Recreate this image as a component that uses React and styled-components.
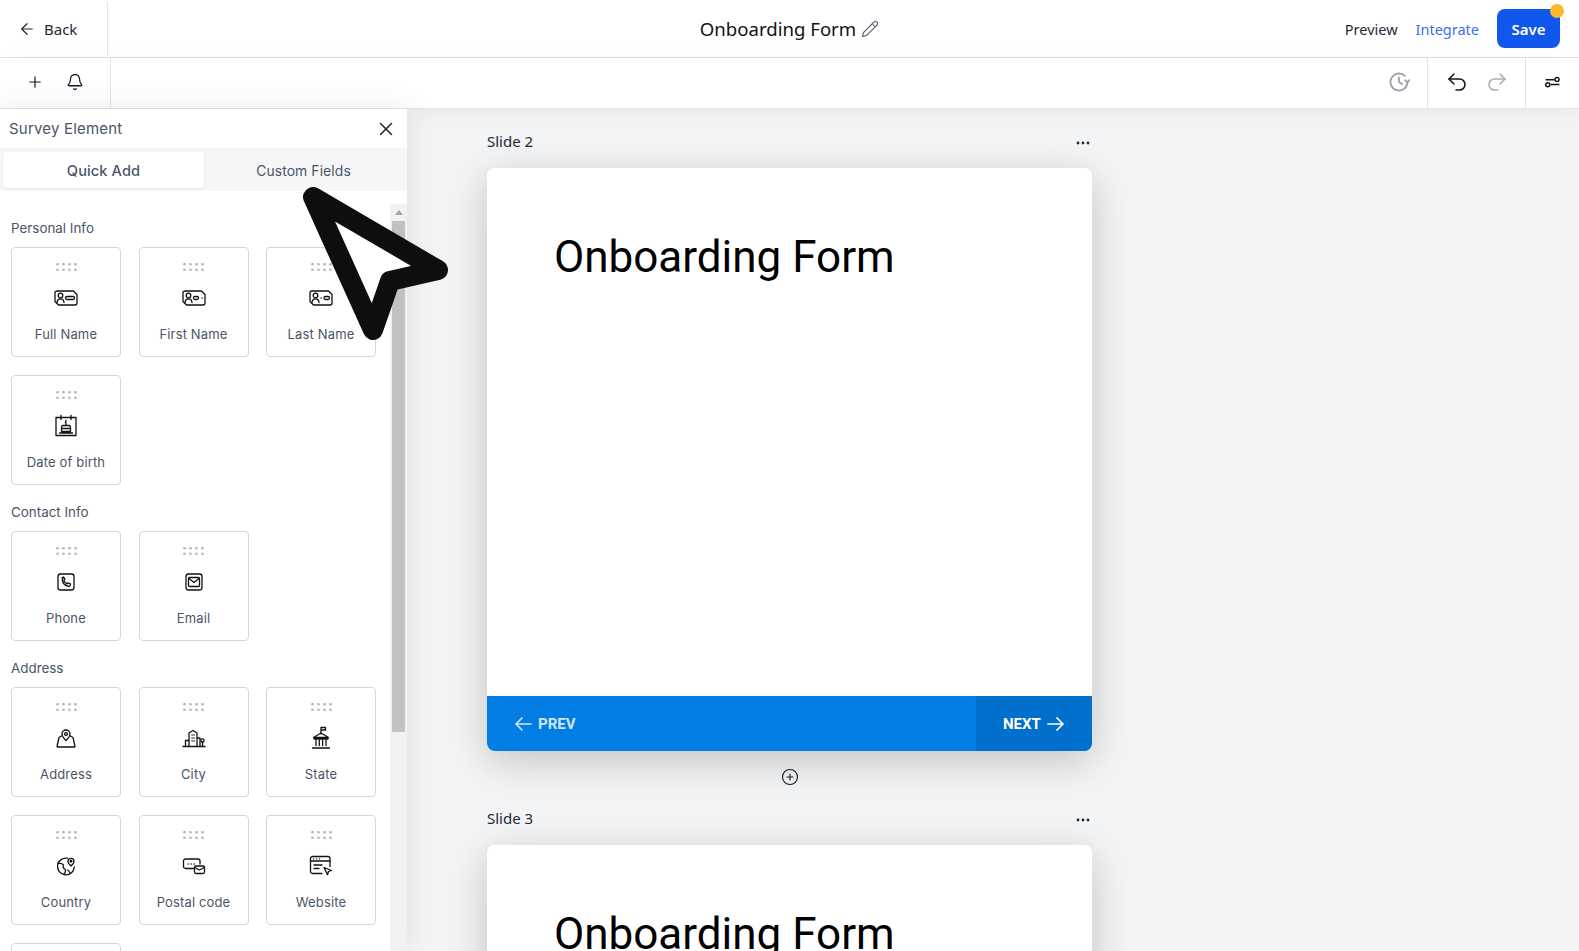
import styled, { createGlobalStyle } from 'styled-components';
import { ArrowLeft, Plus, Bell, X, Pencil, Undo2, Redo2, CirclePlus } from 'lucide-react';

const GlobalStyle = createGlobalStyle`
  html, body {
    margin: 0;
    padding: 0;
    height: 100%;
    background: #f3f4f6;
    font-family: "Noto Sans", sans-serif;
  }
  * { box-sizing: border-box; }
`;

const Page = styled.div`
  position: relative;
  width: 100%;
  height: 100vh;
  display: flex;
  flex-direction: column;
  overflow: hidden;
`;

const TopBar = styled.header`
  height: 58px;
  flex: none;
  display: grid;
  grid-template-columns: 1fr auto 1fr;
  align-items: center;
  background: #fff;
  border-bottom: 1px solid #e3e4e7;
`;

const BackWrap = styled.div`
  width: 108px;
  height: 53px;
  display: flex;
  align-items: center;
  gap: 8px;
  padding-left: 18px;
  border-right: 1px solid #e3e4e7;
  color: #1f2937;
  font-size: 15px;
`;

const FormTitle = styled.div`
  display: flex;
  align-items: center;
  gap: 5px;
  font-family: "Noto Sans", sans-serif;
  font-size: 18.6px;
  color: #111;
`;

const TopActions = styled.div`
  display: flex;
  justify-content: flex-end;
  align-items: center;
  gap: 18px;
  padding-right: 19px;
  font-size: 14.5px;
`;

const TextAction = styled.span`
  color: ${({ $accent }) => ($accent ? '#3b6ff0' : '#1f2937')};
  font-weight: 400;
`;

const SaveButton = styled.button`
  position: relative;
  width: 63px;
  height: 39px;
  border: none;
  border-radius: 8px;
  background: #1157ee;
  color: #fff;
  font-family: "Noto Sans", sans-serif;
  font-size: 15px;
  font-weight: 600;
`;

const SaveDot = styled.span`
  position: absolute;
  top: -5px;
  right: -4px;
  width: 14px;
  height: 14px;
  border-radius: 50%;
  background: #fbb62a;
`;

const ToolBar = styled.div`
  position: relative;
  z-index: 1;
  height: 51px;
  flex: none;
  display: flex;
  align-items: stretch;
  justify-content: space-between;
  background: #fff;
  border-bottom: 1px solid #e3e4e7;
  box-shadow: 0 4px 22px rgba(0, 0, 0, 0.05);
`;

const ToolGroup = styled.div`
  display: flex;
  align-items: center;
  width: ${({ $w }) => $w}px;
  justify-content: ${({ $center }) => ($center ? 'center' : 'flex-start')};
  gap: ${({ $gap }) => $gap || 0}px;
  padding-left: ${({ $pad }) => $pad || 0}px;
  padding-bottom: 2px;
  border-right: ${({ $right }) => ($right ? '1px solid #e3e4e7' : 'none')};
  border-left: ${({ $left }) => ($left ? '1px solid #e3e4e7' : 'none')};
  color: #111827;
`;

const RightTools = styled.div`
  display: flex;
  align-items: stretch;
`;

const Body = styled.div`
  flex: 1;
  min-height: 0;
  display: flex;
`;

const Panel = styled.aside`
  position: relative;
  z-index: 2;
  width: 407px;
  flex: none;
  display: flex;
  flex-direction: column;
  background: #fff;
  box-shadow: 0 0 30px rgba(0, 0, 0, 0.09);
`;

const PanelHead = styled.div`
  height: 39px;
  flex: none;
  display: flex;
  align-items: center;
  justify-content: space-between;
  padding: 0 10px 0 9px;
  font-family: Inter, sans-serif;
  font-size: 15px;
  letter-spacing: 0.2px;
  color: #4a5568;
`;

const Tabs = styled.div`
  height: 43px;
  flex: none;
  display: grid;
  grid-template-columns: 201px 1fr;
  padding: 4px 0 3px 3px;
  background: #f5f6f8;
`;

const Tab = styled.div`
  display: flex;
  align-items: center;
  justify-content: center;
  border-radius: 4px;
  padding: ${({ $active }) => ($active ? '1px 0 0' : '2px 4px 0 0')};
  font-family: Inter, sans-serif;
  font-size: ${({ $active }) => ($active ? '14.6px' : '13.9px')};
  font-weight: ${({ $active }) => ($active ? 500 : 400)};
  letter-spacing: 0.1px;
  color: #4a5568;
  background: ${({ $active }) => ($active ? '#fff' : 'transparent')};
  box-shadow: ${({ $active }) => ($active ? '0 1px 3px rgba(0,0,0,.08)' : 'none')};
`;

const PanelBody = styled.div`
  flex: 1;
  min-height: 0;
  display: flex;
`;

const FieldList = styled.div`
  flex: 1;
  overflow: hidden;
  padding: 27px 0 0 11px;
`;

const Section = styled.section`
  margin-bottom: 17px;
`;

const SectionLabel = styled.div`
  height: 20px;
  line-height: 20px;
  margin-bottom: 9px;
  font-family: Inter, sans-serif;
  font-size: 13.4px;
  color: #4a5568;
`;

const CardGrid = styled.div`
  display: grid;
  grid-template-columns: repeat(3, 110px);
  column-gap: 17.5px;
  row-gap: 18px;
`;

const FieldCard = styled.div`
  height: 110px;
  display: flex;
  flex-direction: column;
  align-items: center;
  padding-top: 15px;
  background: #fff;
  border: 1px solid #d3d6e0;
  border-radius: 4px;
`;

const IconSlot = styled.div`
  height: 24px;
  margin-top: 15px;
  display: flex;
  align-items: center;
  justify-content: center;
`;

const FieldName = styled.div`
  margin-top: 15.5px;
  font-family: Inter, sans-serif;
  font-size: 13px;
  letter-spacing: 0.15px;
  color: #4a5568;
`;

const ScrollTrack = styled.div`
  width: 17px;
  flex: none;
  margin-top: 13px;
  background: #f1f1f1;
  display: flex;
  flex-direction: column;
  align-items: center;
`;

const ScrollArrow = styled.div`
  height: 17px;
  display: flex;
  align-items: center;
  &::before {
    content: '';
    border-left: 4px solid transparent;
    border-right: 4px solid transparent;
    border-bottom: 5px solid #a3a3a3;
  }
`;

const ScrollThumb = styled.div`
  width: 13px;
  height: 511px;
  background: #c1c1c1;
`;

const Canvas = styled.main`
  flex: 1;
  min-width: 0;
  overflow: hidden;
  padding: 21px 0 0 80px;
  background: #f3f4f6;
`;

const SlideHead = styled.div`
  width: 605px;
  height: 25px;
  margin-bottom: 13px;
  display: flex;
  align-items: center;
  justify-content: space-between;
  padding-right: 2px;
  font-size: 15px;
  color: #1f2937;
`;

const SlideName = styled.span`
  margin-bottom: 4px;
`;

const SlideCard = styled.div`
  width: 605px;
  height: ${({ $h }) => $h}px;
  display: flex;
  flex-direction: column;
  background: #fff;
  border-radius: 8px;
  overflow: hidden;
`;

const CardShadow = styled.div`
  width: 605px;
  border-radius: 8px;
  box-shadow: 0 10px 40px rgba(0, 0, 0, 0.2);
`;

const SlideTitle = styled.h1`
  flex: 1;
  margin: 0;
  padding: 60px 0 0 67px;
  font-family: Roboto, sans-serif;
  font-size: 44px;
  line-height: 58px;
  font-weight: 400;
  color: #000;
`;

const SlideFooter = styled.div`
  height: 55px;
  flex: none;
  display: flex;
  justify-content: space-between;
  background: #017de3;
  font-family: Roboto, sans-serif;
  font-size: 15px;
  font-weight: 700;
`;

const NavButton = styled.div`
  display: flex;
  align-items: center;
  gap: 6px;
  width: ${({ $next }) => ($next ? '116px' : 'auto')};
  padding-left: ${({ $next }) => ($next ? '27px' : '28px')};
  background: ${({ $next }) => ($next ? '#0070cc' : 'transparent')};
  color: ${({ $next }) => ($next ? '#fff' : '#cfe6fb')};
`;

const AddSlide = styled.div`
  width: 605px;
  height: 56px;
  display: flex;
  justify-content: center;
  padding-top: 17px;
  color: #111827;
`;

const CursorMark = styled.svg`
  position: absolute;
  left: 295px;
  top: 180px;
  z-index: 5;
`;

const glyph = { fill: 'none', stroke: '#111', strokeWidth: 1.3, strokeLinecap: 'round', strokeLinejoin: 'round' };

function Glyph({ children, w = 24, h = 24 }) {
  return (
    <svg width={w} height={h} viewBox="0 0 24 24" {...glyph}>
      {children}
    </svg>
  );
}

const person = (
  <>
    <circle cx="6.5" cy="9.5" r="2.3" />
    <path d="M3 16.5c.3-2.6 1.8-3.6 3.5-3.6s3.2 1 3.5 3.6" />
  </>
);
const idCard = <path d="M3 5h16.5L23 8.5V17a2 2 0 0 1-2 2H4.5L1 15.5V7a2 2 0 0 1 2-2z" />;

const ICONS = {
  fullName: (
    <Glyph>
      {idCard}
      {person}
      <rect x="11.5" y="10.5" width="9" height="3" rx="1.5" />
    </Glyph>
  ),
  firstName: (
    <Glyph>
      {idCard}
      {person}
      <rect x="11.5" y="10.5" width="5" height="3" rx="1.5" />
      <path d="M20 12h.2" />
    </Glyph>
  ),
  lastName: (
    <Glyph>
      {idCard}
      {person}
      <path d="M12 12h.2" />
      <rect x="15" y="10.5" width="5.5" height="3" rx="1.5" />
    </Glyph>
  ),
  birth: (
    <Glyph>
      <rect x="2" y="3.5" width="20" height="18" />
      <path d="M7 1.5v4M17 1.5v4" />
      <path d="M12 6.5l-.6 2.2M12 9v2.5M7.5 14.5a1.5 2.5 0 0 1 1.5-3h6a1.5 2.5 0 0 1 1.5 3z" />
      <path d="M7.5 14.5v3h9v-3M5.5 19h13" />
    </Glyph>
  ),
  phone: (
    <Glyph>
      <rect x="4" y="4" width="16" height="16" rx="2.5" />
      <path d="M8 7.5l1.6-.5 1.2 2.4-1 1c.6 1.5 1.9 2.8 3.4 3.4l1-1 2.4 1.2-.5 1.6c-.2.5-.7.8-1.3.7-3.5-.5-6.2-3.2-6.6-6.6-.1-.7.2-1.5.8-1.8z" />
    </Glyph>
  ),
  email: (
    <Glyph>
      <rect x="4" y="4" width="16" height="16" rx="2.5" />
      <rect x="6.5" y="7.5" width="11" height="9" rx="1.2" />
      <path d="M7 8.5l5 4 5-4" />
    </Glyph>
  ),
  address: (
    <Glyph>
      <path d="M12 14.5c-2.5-2.5-4-4.4-4-6.5a4 4 0 0 1 8 0c0 2.1-1.5 4-4 6.5z" />
      <circle cx="12" cy="8" r="1.4" />
      <path d="M7.5 10L5 11.5 3 20.5c0 .3.2.5.5.5h17c.3 0 .5-.2.5-.5L19 11.5 16.5 10" />
    </Glyph>
  ),
  city: (
    <Glyph>
      <path d="M1 20.5h22M3.5 20.5v-6H7M7 20.5V7l4-2.5L15 7v13.5M15 12h3v8.5" />
      <path d="M10 9h.2M12 9h.2M10 12h.2M12 12h.2M10 15h.2M12 15h.2" />
      <circle cx="20.5" cy="14.5" r="1.6" />
      <path d="M20.5 16v4.5" />
    </Glyph>
  ),
  state: (
    <Glyph>
      <path d="M12 8V1.5h4.5V4H12" />
      <path d="M4.5 11.5L12 7l7.5 4.5zM5 13h14M7 14.5v5M10.3 14.5v5M13.6 14.5v5M17 14.5v5M3.5 22h17" />
    </Glyph>
  ),
  country: (
    <Glyph>
      <path d="M13.5 4.2A8.4 8.4 0 1 0 20.3 13" />
      <path d="M4 9c2 .5 4 .2 5 1.5s-.5 2.5.5 3.5 2 1 2 2.5-.5 2.5-1.5 3.5M16 19c-.5-1.5-1-2.5-2.5-3" />
      <path d="M17 12c-2-2-3-3.2-3-4.6a3 3 0 0 1 6 0c0 1.4-1 2.6-3 4.6z" />
      <circle cx="17" cy="7.3" r=".8" />
    </Glyph>
  ),
  postal: (
    <Glyph>
      <path d="M12 14.5H3.5a2 2 0 0 1-2-2V7a2 2 0 0 1 2-2H16a2 2 0 0 1 2 2v3" />
      <path d="M6 10h.2M9 10h.2M12 10h.2" />
      <rect x="12.5" y="12" width="10" height="7.5" rx="1.5" />
      <path d="M12.8 13.5l4.7 2.5 4.7-2.5" />
    </Glyph>
  ),
  website: (
    <Glyph>
      <path d="M13 19.5H3.5a2 2 0 0 1-2-2v-13a2 2 0 0 1 2-2H19a2 2 0 0 1 2 2v8" />
      <path d="M1.5 7H21M4.5 4.8h.2M7.5 4.8h.2M10.5 4.8h.2M5 11h8M5 14.5h5" />
      <path d="M15 13.5l7.5 3-3 1-1 3.2z" />
    </Glyph>
  ),
};

const SECTIONS = [
  {
    name: 'Personal Info',
    fields: [
      ['Full Name', 'fullName'],
      ['First Name', 'firstName'],
      ['Last Name', 'lastName'],
      ['Date of birth', 'birth'],
    ],
  },
  {
    name: 'Contact Info',
    fields: [
      ['Phone', 'phone'],
      ['Email', 'email'],
    ],
  },
  {
    name: 'Address',
    fields: [
      ['Address', 'address'],
      ['City', 'city'],
      ['State', 'state'],
      ['Country', 'country'],
      ['Postal code', 'postal'],
      ['Website', 'website'],
      ['', null],
    ],
  },
];

function DragDots() {
  return (
    <svg width="21" height="8" viewBox="0 0 21 8" fill="#b2b8ca">
      {[1.5, 7.5, 13.5, 19.5].map((x) =>
        [1.2, 6.8].map((y) => <circle key={`${x}-${y}`} cx={x} cy={y} r="1.35" />)
      )}
    </svg>
  );
}

function HistoryIcon() {
  return (
    <svg width="22" height="22" viewBox="0 0 22 22" fill="none" stroke="#9ca0a8" strokeWidth="1.8" strokeLinecap="round" strokeLinejoin="round">
      <path d="M19.5 11a8.5 8.5 0 1 1-2.6-6.1" />
      <path d="M11 6.5V11l3 2" />
      <path d="M21.5 9l-2 2.3-2.3-2" />
    </svg>
  );
}

function SlidersIcon() {
  return (
    <svg width="15" height="12" viewBox="0 0 15 12" fill="none" stroke="#111827" strokeWidth="1.5">
      <path d="M0.5 3.8h9M5.5 8.4h9" />
      <circle cx="12" cy="3.4" r="2" />
      <circle cx="2.8" cy="8.7" r="2" />
    </svg>
  );
}

function DotsIcon() {
  return (
    <svg width="14" height="4" viewBox="0 0 14 4" fill="#1f2937">
      <circle cx="2" cy="2" r="1.4" />
      <circle cx="7" cy="2" r="1.4" />
      <circle cx="12" cy="2" r="1.4" />
    </svg>
  );
}

function NavArrow({ flip }) {
  return (
    <svg
      width="17"
      height="14"
      viewBox="0 0 17 14"
      fill="none"
      stroke="currentColor"
      strokeWidth="1.7"
      strokeLinecap="round"
      strokeLinejoin="round"
    >
      <path d={flip ? 'M1 7h15M10 1l6 6-6 6' : 'M16 7H1M7 1L1 7l6 6'} />
    </svg>
  );
}

export default function App() {
  return (
    <Page>
      <GlobalStyle />
      <TopBar>
        <BackWrap>
          <ArrowLeft size={18} strokeWidth={1.6} />
          Back
        </BackWrap>
        <FormTitle>
          Onboarding Form
          <Pencil size={18} strokeWidth={1.4} color="#4b5563" />
        </FormTitle>
        <TopActions>
          <TextAction>Preview</TextAction>
          <TextAction $accent>Integrate</TextAction>
          <SaveButton>
            Save
            <SaveDot />
          </SaveButton>
        </TopActions>
      </TopBar>

      <ToolBar>
        <ToolGroup $w={111} $right $pad={26} $gap={22}>
          <Plus size={18} strokeWidth={1.6} />
          <Bell size={18} strokeWidth={1.7} />
        </ToolGroup>
        <RightTools>
          <ToolGroup $w={56} $center>
            <HistoryIcon />
          </ToolGroup>
          <ToolGroup $w={98} $left $center $gap={16}>
            <Undo2 size={24} strokeWidth={1.6} />
            <Redo2 size={24} strokeWidth={1.6} color="#a9adb5" />
          </ToolGroup>
          <ToolGroup $w={54} $left $center>
            <SlidersIcon />
          </ToolGroup>
        </RightTools>
      </ToolBar>

      <Body>
        <Panel>
          <PanelHead>
            Survey Element
            <X size={22} strokeWidth={1.7} color="#1f2937" />
          </PanelHead>
          <Tabs>
            <Tab $active>Quick Add</Tab>
            <Tab>Custom Fields</Tab>
          </Tabs>
          <PanelBody>
            <FieldList>
              {SECTIONS.map((section) => (
                <Section key={section.name}>
                  <SectionLabel>{section.name}</SectionLabel>
                  <CardGrid>
                    {section.fields.map(([label, icon]) => (
                      <FieldCard key={label || 'more'}>
                        <DragDots />
                        {icon && <IconSlot>{ICONS[icon]}</IconSlot>}
                        {label && <FieldName>{label}</FieldName>}
                      </FieldCard>
                    ))}
                  </CardGrid>
                </Section>
              ))}
            </FieldList>
            <ScrollTrack>
              <ScrollArrow />
              <ScrollThumb />
            </ScrollTrack>
          </PanelBody>
        </Panel>

        <Canvas>
          <SlideHead>
            <SlideName>Slide 2</SlideName>
            <DotsIcon />
          </SlideHead>
          <CardShadow>
            <SlideCard $h={583}>
              <SlideTitle>Onboarding Form</SlideTitle>
              <SlideFooter>
                <NavButton>
                  <NavArrow />
                  PREV
                </NavButton>
                <NavButton $next>
                  NEXT
                  <NavArrow flip />
                </NavButton>
              </SlideFooter>
            </SlideCard>
          </CardShadow>
          <AddSlide>
            <CirclePlus size={18} strokeWidth={1.5} />
          </AddSlide>
          <SlideHead>
            <SlideName>Slide 3</SlideName>
            <DotsIcon />
          </SlideHead>
          <CardShadow>
            <SlideCard $h={583}>
              <SlideTitle>Onboarding Form</SlideTitle>
            </SlideCard>
          </CardShadow>
        </Canvas>
      </Body>

      <CursorMark width="165" height="170" viewBox="295 180 165 170">
        <path
          d="M313 197 L438 270 L390 281 L373 330 Z"
          fill="#fff"
          stroke="#0e0e0e"
          strokeWidth="20"
          strokeLinejoin="round"
        />
      </CursorMark>
    </Page>
  );
}
